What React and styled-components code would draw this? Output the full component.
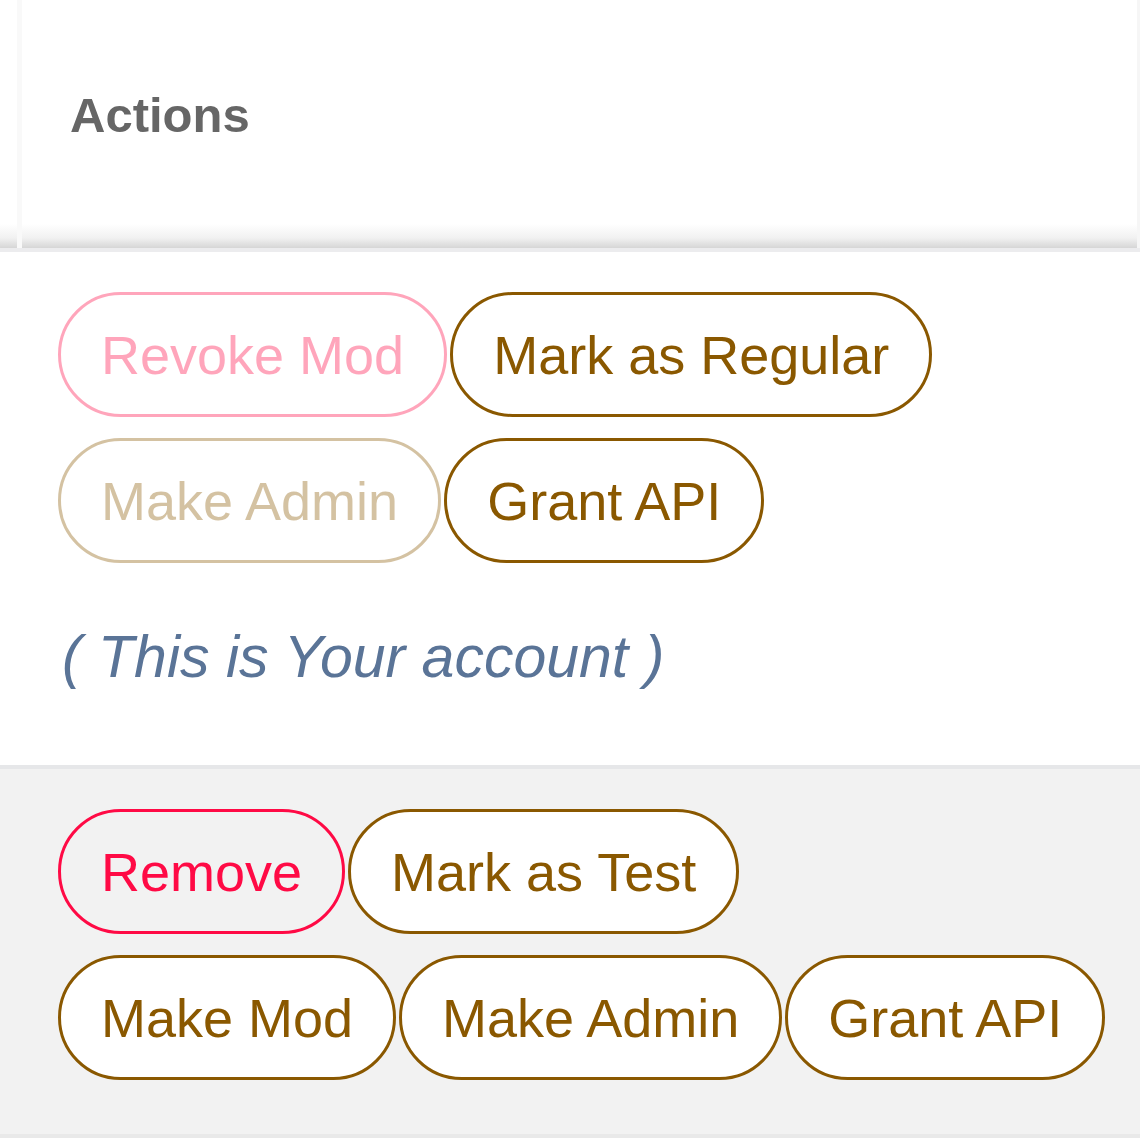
import React from 'react'
import styled, { createGlobalStyle } from 'styled-components'

const GlobalStyle = createGlobalStyle`
    html, body {
        margin: 0;
        padding: 0;
        background: #ffffff;
        font-family: "Liberation Sans", Arial, Helvetica, sans-serif;
    }
`;

const Table = styled.div`
    width: 1140px;
    display: flex;
    flex-direction: column;
`;

const Header = styled.div`
    height: 248px;
    background: linear-gradient(to bottom, #ffffff 0, #ffffff 224px, #f1f1f1 238px, #d6d6d6 248px);
    border-bottom: 4px solid #ececee;
    padding-left: 17px;
    display: flex;
`;

const HeaderCell = styled.div`
    flex: 1;
    display: flex;
    align-items: center;
    padding-left: 48px;
    padding-bottom: 18px;
    border-left: 5px solid #f9f9f9;
    border-right: 3px solid #f6f6f6;
`;

const HeaderTitle = styled.span`
    font-size: 49px;
    font-weight: 700;
    color: #666666;
`;

const Row = styled.div`
    background: ${({ $shade }) => ($shade ? '#f2f2f2' : '#ffffff')};
    padding: 40px 0 ${({ $shade }) => ($shade ? '54px' : '74px')} 58px;
    border-bottom: 4px solid ${({ $shade }) => ($shade ? '#e9e9e9' : '#e6e7e9')};
    display: flex;
    flex-direction: column;
    gap: 21px;
`;

const ButtonLine = styled.div`
    display: flex;
    gap: 3px;
`;

const Pill = styled.button`
    box-sizing: border-box;
    height: 125px;
    padding: 0 40px;
    border-radius: 63px;
    border: 3px solid ${({ $danger }) => ($danger ? '#ff0a45' : '#8a5800')};
    color: ${({ $danger }) => ($danger ? '#ff0a45' : '#8a5800')};
    background: ${({ $danger }) => ($danger ? 'transparent' : '#ffffff')};
    opacity: ${({ disabled }) => (disabled ? 0.36 : 1)};
    font-family: "Liberation Sans", Arial, Helvetica, sans-serif;
    font-size: 54px;
    white-space: nowrap;
    cursor: pointer;
`;

const Note = styled.div`
    margin-top: 39px;
    padding-left: 4px;
    font-size: 59px;
    font-style: italic;
    color: #5a7497;
`;

const App = () => {
  return (
    <>
      <GlobalStyle />
      <Table>
        <Header>
          <HeaderCell>
            <HeaderTitle>Actions</HeaderTitle>
          </HeaderCell>
        </Header>
        <Row>
          <ButtonLine>
            <Pill $danger disabled>Revoke Mod</Pill>
            <Pill>Mark as Regular</Pill>
          </ButtonLine>
          <ButtonLine>
            <Pill disabled>Make Admin</Pill>
            <Pill>Grant API</Pill>
          </ButtonLine>
          <Note>( This is Your account )</Note>
        </Row>
        <Row $shade>
          <ButtonLine>
            <Pill $danger>Remove</Pill>
            <Pill>Mark as Test</Pill>
          </ButtonLine>
          <ButtonLine>
            <Pill>Make Mod</Pill>
            <Pill>Make Admin</Pill>
            <Pill>Grant API</Pill>
          </ButtonLine>
        </Row>
      </Table>
    </>
  )
}

export default App
